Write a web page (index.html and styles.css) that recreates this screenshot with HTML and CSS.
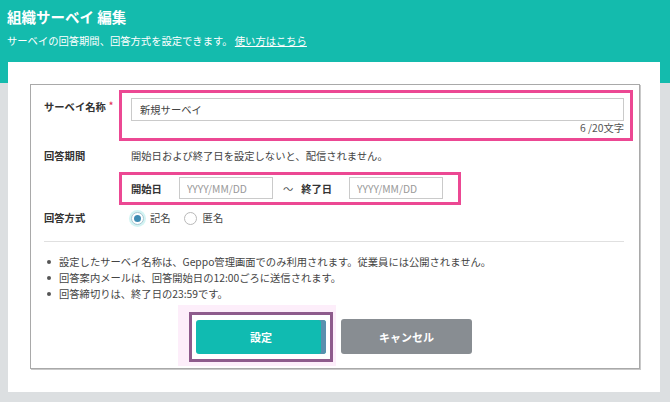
FILE: index.html
```html
<!DOCTYPE html>
<html lang="ja">
<head>
<meta charset="utf-8">
<title>組織サーベイ 編集</title>
<link rel="stylesheet" href="styles.css">
</head>
<body>
<header class="header">
  <h1 class="title">組織サーベイ 編集</h1>
  <p class="subtitle">サーベイの回答期間、回答方式を設定できます。 <a class="link" href="#">使い方はこちら</a></p>
</header>
<main class="card">
  <div class="box">
    <div class="row row-name">
      <div class="label label-name">サーベイ名称<span class="req">*</span></div>
      <div class="hl hl-name">
        <input class="text-input" type="text" value="新規サーベイ">
        <div class="counter">6 /20文字</div>
      </div>
    </div>
    <div class="row row-period">
      <div class="label">回答期間</div>
      <div class="period">
        <div class="note">開始日および終了日を設定しないと、配信されません。</div>
        <div class="hl hl-date">
          <span class="date-label">開始日</span>
          <input class="date-input" type="text" placeholder="YYYY/MM/DD">
          <span class="tilde">～</span>
          <span class="date-label">終了日</span>
          <input class="date-input" type="text" placeholder="YYYY/MM/DD">
        </div>
      </div>
    </div>
    <div class="row row-method">
      <div class="label">回答方式</div>
      <div class="radios">
        <span class="radio checked"></span><span class="radio-text">記名</span>
        <span class="radio"></span><span class="radio-text">匿名</span>
      </div>
    </div>
    <hr class="divider">
    <ul class="notes">
      <li>設定したサーベイ名称は、Geppo管理画面でのみ利用されます。従業員には公開されません。</li>
      <li>回答案内メールは、回答開始日の12:00ごろに送信されます。</li>
      <li>回答締切りは、終了日の23:59です。</li>
    </ul>
    <div class="actions">
      <div class="hl-btn"><button class="btn btn-primary" type="button">設定</button></div>
      <button class="btn btn-cancel" type="button">キャンセル</button>
    </div>
  </div>
</main>
</body>
</html>
```
FILE: styles.css
```css
* { box-sizing: border-box; }
html, body { margin: 0; padding: 0; }
body {
  width: 670px;
  height: 402px;
  overflow: hidden;
  background: linear-gradient(#14bbad 0, #14bbad 83px, #dcdfe1 83px);
  font-family: "Noto Sans CJK JP", "Noto Sans", sans-serif;
  font-size: 10.3px;
  color: #444;
}
.header {
  height: 62px;
  padding: 7px 7px 0;
  color: #fff;
}
.title {
  margin: 0;
  font-size: 14.5px;
  line-height: 20px;
  font-weight: bold;
}
.subtitle {
  margin: 6px 0 0;
  font-size: 10.3px;
  line-height: 16px;
}
.link { color: #fff; text-decoration: underline; }
.card {
  margin: 0 10px 0 8px;
  height: 330px;
  background: #fff;
  padding: 22px 20px 0 22px;
}
.box {
  border: 1px solid #a9a9a9;
  box-shadow: 1px 1px 0 #c9c9c9;
  padding: 5px 6px 14px 13px;
}
.row {
  display: grid;
  grid-template-columns: 75px 1fr;
}
.label {
  font-weight: bold;
  color: #333;
  line-height: 16px;
}
.label-name { padding-top: 8px; }
.req { color: #e23a57; margin-left: 3px; font-size: 9px; vertical-align: 2px; }
.hl { border: 3px solid #ec4893; }
.hl-name { padding: 5px 6px 3px 9px; }
.text-input, .date-input {
  display: block;
  border: 1px solid #cacaca;
  font-family: inherit;
  font-size: 10.3px;
  color: #444;
  outline: none;
  background: #fff;
}
.text-input { width: 100%; height: 23px; padding: 0 8px; }
.counter { text-align: right; line-height: 14px; color: #555; }
.row-period { margin-top: 7px; }
.note { line-height: 16px; padding-left: 12px; }
.hl-date {
  margin-top: 8px;
  width: 342px;
  display: flex;
  align-items: center;
  padding: 2px 0 3px 9px;
}
.date-label { font-weight: bold; color: #333; margin-right: 17px; }
.date-input { width: 94px; height: 22px; padding: 0 7px; }
.date-input::placeholder { color: #9a9a9a; }
.tilde { margin: 0 8px 0 10px; color: #555; }
.row-method { margin-top: 5px; line-height: 16px; }
.radios { display: flex; align-items: center; padding-left: 12px; }
.radio {
  width: 13px;
  height: 13px;
  border: 1px solid #b9b9b9;
  border-radius: 50%;
  background: #fff;
  display: flex;
  align-items: center;
  justify-content: center;
}
.radio.checked { box-shadow: 0 0 0 2px #d3f4f3; border-color: #a9c6d2; }
.radio.checked::after {
  content: "";
  width: 7px;
  height: 7px;
  border-radius: 50%;
  background: #3f8db3;
}
.radio-text { margin: 0 13px 0 6px; }
.divider {
  margin: 15px 9px 0 0;
  border: 0;
  border-top: 1px solid #e0e0e0;
}
.notes {
  list-style: none;
  margin: 12px 0 0;
  padding: 0;
}
.notes li {
  position: relative;
  line-height: 16px;
  padding-left: 15px;
}
.notes li::before {
  content: "";
  position: absolute;
  left: 3px;
  top: 6px;
  width: 4px;
  height: 4px;
  border-radius: 50%;
  background: #555;
}
.actions {
  margin-top: 17px;
  display: flex;
  justify-content: center;
  align-items: flex-start;
  gap: 15px;
  padding-right: 9px;
}
.hl-btn { position: relative; margin-top: 1px; }
.hl-btn::before {
  content: "";
  position: absolute;
  top: -15px; right: -10px; bottom: -12px; left: -18px;
  background: #fdeefa;
  z-index: 0;
}
.hl-btn::after {
  content: "";
  position: absolute;
  top: -8px; right: -7px; bottom: -8px; left: -7px;
  border: 3px solid #8e5b8c;
  background: #fff;
  z-index: 0;
}
.btn {
  display: block;
  border: 0;
  border-radius: 3px;
  font-family: inherit;
  font-size: 11px;
  font-weight: bold;
  color: #fff;
  cursor: pointer;
}
.btn-primary {
  position: relative;
  z-index: 1;
  width: 130px;
  height: 34px;
  background: #10bbb1;
  box-shadow: inset -5px 0 0 #5a8fae;
}
.btn-cancel {
  width: 131px;
  height: 35px;
  background: #888d92;
}
```
